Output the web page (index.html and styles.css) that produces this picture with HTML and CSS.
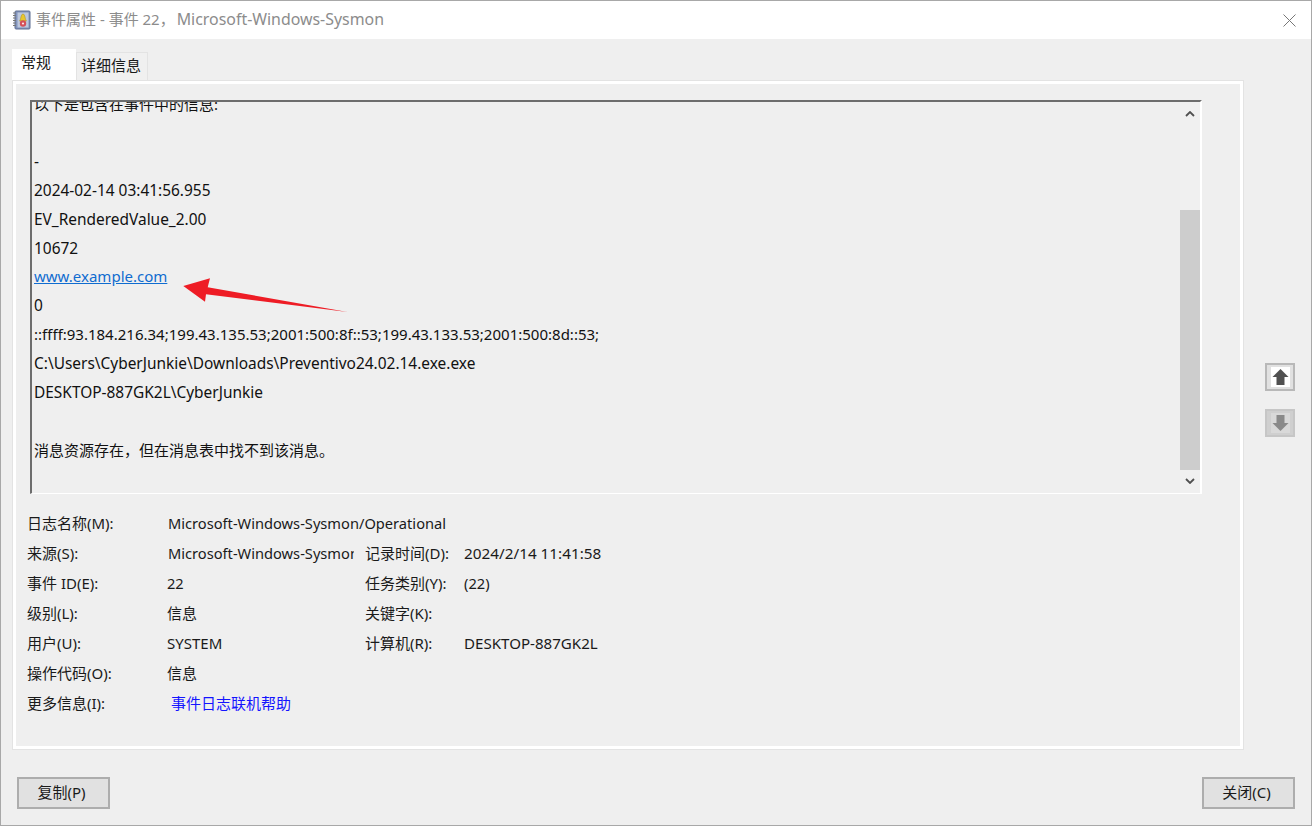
FILE: index.html
```html
<!DOCTYPE html>
<html lang="zh-CN">
<head>
<meta charset="utf-8">
<title>事件属性</title>
<link rel="stylesheet" href="styles.css">
</head>
<body>
<div class="window">
  <header class="titlebar">
    <svg class="app-icon" width="18" height="20" viewBox="0 0 18 20">
      <rect x="2" y="1" width="15" height="18" rx="1" fill="#8294bd" stroke="#5f6f92"/>
      <rect x="4.5" y="2.5" width="11" height="15" fill="#bcc8de"/>
      <path d="M0 3h3M0 5.5h3M0 8h3M0 10.5h3M0 13h3M0 15.5h3" stroke="#777" stroke-width="1"/>
      <path d="M6.5 11c1.5-1 1.2-7 3.5-7s2 6 3.5 7z" fill="#e8c62e" stroke="#b3961c" stroke-width=".6"/>
      <circle cx="10" cy="13.5" r="3.2" fill="#d4505a"/>
      <circle cx="10" cy="13.5" r="1.1" fill="#fbe9e9"/>
    </svg>
    <span class="title">事件属性 - 事件 22，<span class="title-latin">Microsoft-Windows-Sysmon</span></span>
    <svg class="close-x" width="13" height="13" viewBox="0 0 13 13"><path d="M.5.5l12 12M12.5.5l-12 12" stroke="#777" stroke-width="1" fill="none"/></svg>
  </header>

  <main class="content">
    <div class="tabs">
      <div class="tab tab-active">常规</div>
      <div class="tab">详细信息</div>
    </div>

    <div class="stage">
      <section class="panel">
        <div class="viewer">
          <div class="lines">
            <div class="line line-cjk line-first">以下是包含在事件中的信息:</div>
            <div class="line">&nbsp;</div>
            <div class="line">-</div>
            <div class="line">2024-02-14 03:41:56.955</div>
            <div class="line">EV_RenderedValue_2.00</div>
            <div class="line">10672</div>
            <div class="line line-tight"><a class="link" href="#">www.example.com</a></div>
            <div class="line">0</div>
            <div class="line line-tight">::ffff:93.184.216.34;199.43.135.53;2001:500:8f::53;199.43.133.53;2001:500:8d::53;</div>
            <div class="line">C:\Users\CyberJunkie\Downloads\Preventivo24.02.14.exe.exe</div>
            <div class="line">DESKTOP-887GK2L\CyberJunkie</div>
            <div class="line">&nbsp;</div>
            <div class="line line-cjk">消息资源存在，但在消息表中找不到该消息。</div>
          </div>
          <div class="scrollbar">
            <svg class="chev chev-up" width="10" height="6" viewBox="0 0 10 6"><path d="M1 5l4-4 4 4" fill="none" stroke="#505050" stroke-width="1.8"/></svg>
            <div class="track"><div class="thumb"></div></div>
            <svg class="chev chev-down" width="10" height="6" viewBox="0 0 10 6"><path d="M1 1l4 4 4-4" fill="none" stroke="#505050" stroke-width="1.8"/></svg>
          </div>
        </div>

        <div class="fields">
          <span>日志名称(M):</span><span class="span3 latin name">Microsoft-Windows-Sysmon/Operational</span>
          <span>来源(S):</span><span class="clip latin name">Microsoft-Windows-Sysmon</span><span>记录时间(D):</span><span class="date">2024/2/14 11:41:58</span>
          <span>事件 ID(E):</span><span class="latin">22</span><span>任务类别(Y):</span><span class="latin">(22)</span>
          <span>级别(L):</span><span>信息</span><span>关键字(K):</span><span></span>
          <span>用户(U):</span><span>SYSTEM</span><span>计算机(R):</span><span class="host">DESKTOP-887GK2L</span>
          <span>操作代码(O):</span><span class="span3">信息</span>
          <span>更多信息(I):</span><a class="help span3" href="#">事件日志联机帮助</a>
        </div>
      </section>

      <div class="nav">
        <button class="nav-btn" type="button">
          <svg width="19" height="20" viewBox="0 0 19 20"><rect width="19" height="20" fill="#fff"/><path d="M9.5 2l8 8h-4v8h-8v-8h-4z" fill="#505050"/></svg>
        </button>
        <button class="nav-btn nav-off" type="button">
          <svg width="19" height="20" viewBox="0 0 19 20"><rect width="19" height="20" fill="#d9d9d9"/><path d="M9.5 18l8-8h-4V2h-8v8h-4z" fill="#8a8a8a"/></svg>
        </button>
      </div>
    </div>

    <footer class="actions">
      <button class="btn" type="button">复制(P)</button>
      <button class="btn" type="button">关闭(C)</button>
    </footer>
  </main>

  <svg class="annotation" width="170" height="40" viewBox="0 0 170 40">
    <path d="M1.3 9L28 1.3 25.7 10.3 165.5 35 24 17.3 23 24.7z" fill="#ee1c25"/>
  </svg>
</div>
</body>
</html>
```

FILE: styles.css
```css
* { box-sizing: border-box; }
html, body { margin: 0; padding: 0; }
body {
  width: 1312px;
  height: 826px;
  overflow: hidden;
  font-family: "Noto Sans", "Noto Sans CJK SC", sans-serif;
  font-size: 15px;
  color: #1a1a1a;
}
.window {
  position: relative;
  width: 1312px;
  height: 826px;
  border: 1px solid #a8a8a8;
  background: #efefef;
  display: flex;
  flex-direction: column;
}
.titlebar {
  height: 38px;
  flex: none;
  background: #fff;
  display: flex;
  align-items: center;
  padding: 0 15px 0 12px;
  gap: 5px;
}
.title { color: #8c8c8c; font-size: 15px; line-height: 36px; height: 38px; flex: 1; }
.title-latin { font-size: 15.9px; margin-left: 2px; }
.content { flex: 1; display: flex; flex-direction: column; padding: 10px 16px 15px 11px; }
.tabs { height: 31px; flex: none; display: flex; align-items: flex-end; }
.tab {
  width: 72px;
  height: 28px;
  background: #f0f0f0;
  border: 1px solid #e3e3e3;
  border-bottom: 0;
  padding-left: 4px;
  font-size: 15px;
  line-height: 25px;
}
.tab-active {
  width: 64px;
  height: 31px;
  background: #fff;
  border: 0;
  line-height: 27px;
  padding-left: 9px;
}
.stage { flex: none; display: flex; align-items: flex-start; }
.panel {
  width: 1232px;
  height: 670px;
  flex: none;
  background: #efefef;
  border: 4px solid #fff;
  outline: 1px solid #e3e3e3;
  outline-offset: -1px;
  padding: 16px 38px 0 14px;
}
.viewer {
  width: 1172px;
  height: 394px;
  display: flex;
  border-top: 2px solid #6d6d6d;
  border-left: 2px solid #6d6d6d;
  border-right: 2px solid #fff;
  border-bottom: 1px solid #fff;
  overflow: hidden;
}
.lines { flex: 1; min-width: 0; overflow: hidden; padding-left: 2px; font-size: 15.44px; color: #111; }
.line { height: 28.85px; line-height: 28.85px; white-space: nowrap; position: relative; top: -0.6px; }
.line-first { margin-top: -12px; top: 0; }
.line-cjk { font-size: 15px; }
.line-tight { font-size: 15.02px; }
.link { color: #0f6cd0; text-decoration: underline; }
.scrollbar { width: 20px; flex: none; display: flex; flex-direction: column; align-items: center; background: #f0f0f0; }
.chev { flex: none; }
.chev-up { margin: 9px 0 8px; }
.chev-down { margin: 8px 0 9px; }
.track { flex: 1; width: 20px; display: flex; align-items: flex-end; }
.thumb { width: 20px; height: 260px; background: #cdcdcd; }
.fields {
  margin: 14px 0 0 -3px;
  display: grid;
  grid-template-columns: 140px 198px 99px 1fr;
  grid-auto-rows: 30px;
  align-items: center;
  font-size: 15px;
  line-height: 30px;
  white-space: nowrap;
}
.latin { font-size: 14.65px; }
.name { margin-left: 1px; }
.date { font-size: 15.3px; }
.host { font-size: 15.1px; }
.span3 { grid-column: span 3; }
.clip { overflow: hidden; width: 186px; }
.help { color: #1414ff; text-decoration: none; padding-left: 4px; }
.nav { margin: 283px 0 0 21px; display: flex; flex-direction: column; gap: 18px; }
.nav-btn {
  width: 30px;
  height: 28px;
  padding: 0;
  background: #e1e1e1;
  border: 2px solid #b8b8b8;
  display: flex;
  align-items: center;
  justify-content: center;
}
.nav-off { background: #cfcfcf; border-color: #c6c6c6; }
.actions { margin-top: 27px; padding: 0 0 0 5px; display: flex; justify-content: space-between; }
.btn {
  width: 93px;
  height: 32px;
  background: #e1e1e1;
  border: 2px solid #adadad;
  font: inherit;
  font-size: 15px;
  color: #1a1a1a;
  padding: 0 4px 3px 0;
}
.annotation { position: absolute; left: 181px; top: 276px; }
```
